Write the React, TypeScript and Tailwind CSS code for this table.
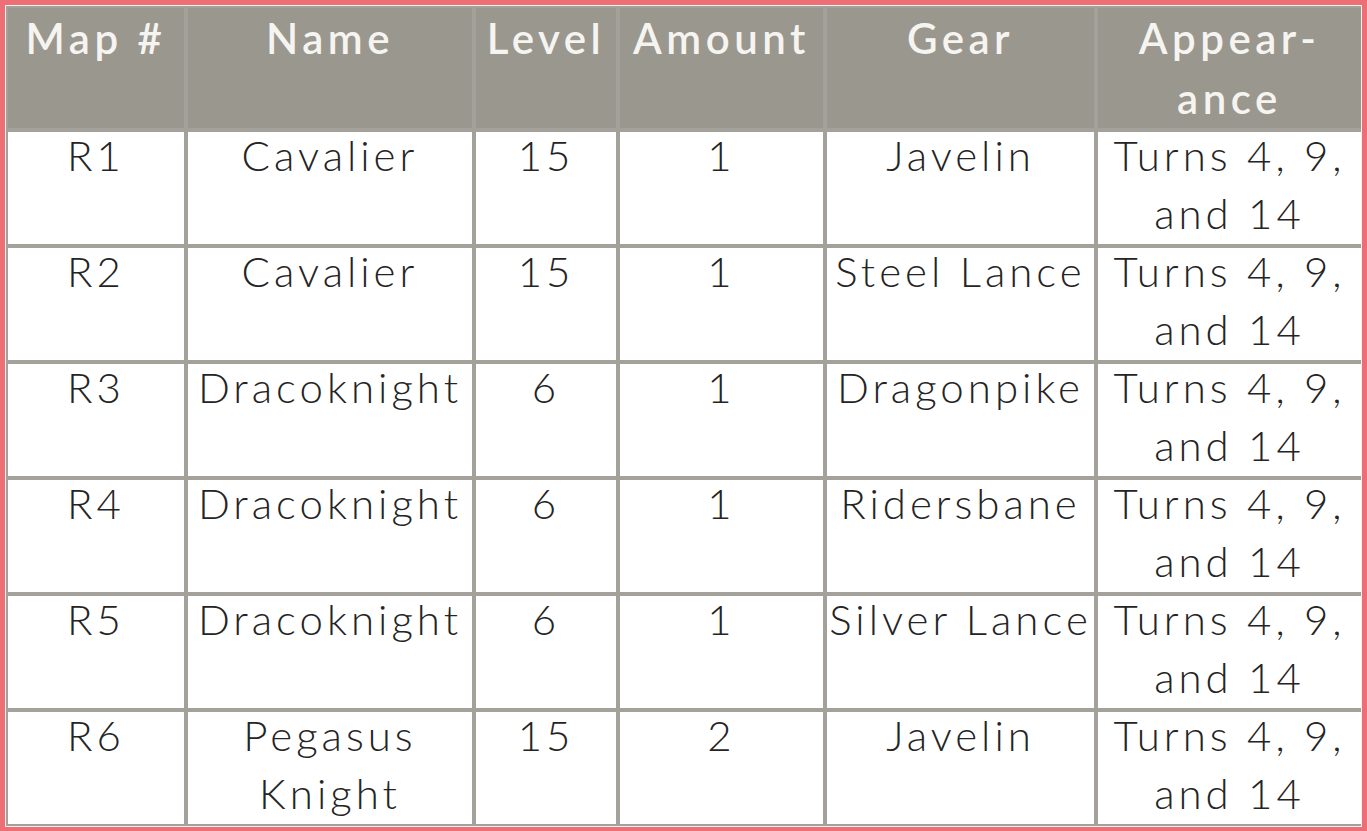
import React from "react";

const rows: [string, string, string, string, string][] = [
  ["R1", "Cavalier", "15", "1", "Javelin"],
  ["R2", "Cavalier", "15", "1", "Steel Lance"],
  ["R3", "Dracoknight", "6", "1", "Dragonpike"],
  ["R4", "Dracoknight", "6", "1", "Ridersbane"],
  ["R5", "Dracoknight", "6", "1", "Silver Lance"],
  ["R6", "Pegasus Knight", "15", "2", "Javelin"],
];

const headers = ["Map #", "Name", "Level", "Amount", "Gear", "Appear-\nance"];

function Cell({ text }: { text: string }) {
  let lines: string[] = [text];
  if (text === "Pegasus Knight") lines = ["Pegasus", "Knight"];
  if (text === "Turns 4, 9, and 14") lines = ["Turns 4, 9,", "and 14"];
  return (
    <div className="bg-white text-[#242424] text-[42px] font-light tracking-[4px] text-center">
      <div className="leading-[46px]">{lines[0]}</div>
      {lines[1] && <div className="leading-[58px] mt-[6px]">{lines[1]}</div>}
    </div>
  );
}

export default function App() {
  return (
    <div
      className="w-[1367px] h-[831px] bg-[#ee6e75] pl-[5px] pt-[5px] overflow-hidden"
      style={{ fontFamily: "Lato, 'Open Sans', sans-serif" }}
    >
      <div className="w-[1357px] bg-[#f4f2ef] p-[1px]">
        <div className="grid grid-cols-[176px_284px_140px_203px_267px_263px] grid-rows-[120px_repeat(6,112px)] gap-[4px] bg-[#a3a19a] p-[2px]">
          {headers.map((h, i) => (
            <div
              key={i}
              className="bg-[#9a978f] text-[#f6f4f0] text-[42px] leading-[60px] font-semibold tracking-[4.5px] text-center whitespace-pre-line"
            >
              {h}
            </div>
          ))}
          {rows.map((r, ri) => (
            <React.Fragment key={ri}>
              {[...r, "Turns 4, 9, and 14"].map((c, ci) => (
                <Cell key={ci} text={c} />
              ))}
            </React.Fragment>
          ))}
        </div>
      </div>
    </div>
  );
}
